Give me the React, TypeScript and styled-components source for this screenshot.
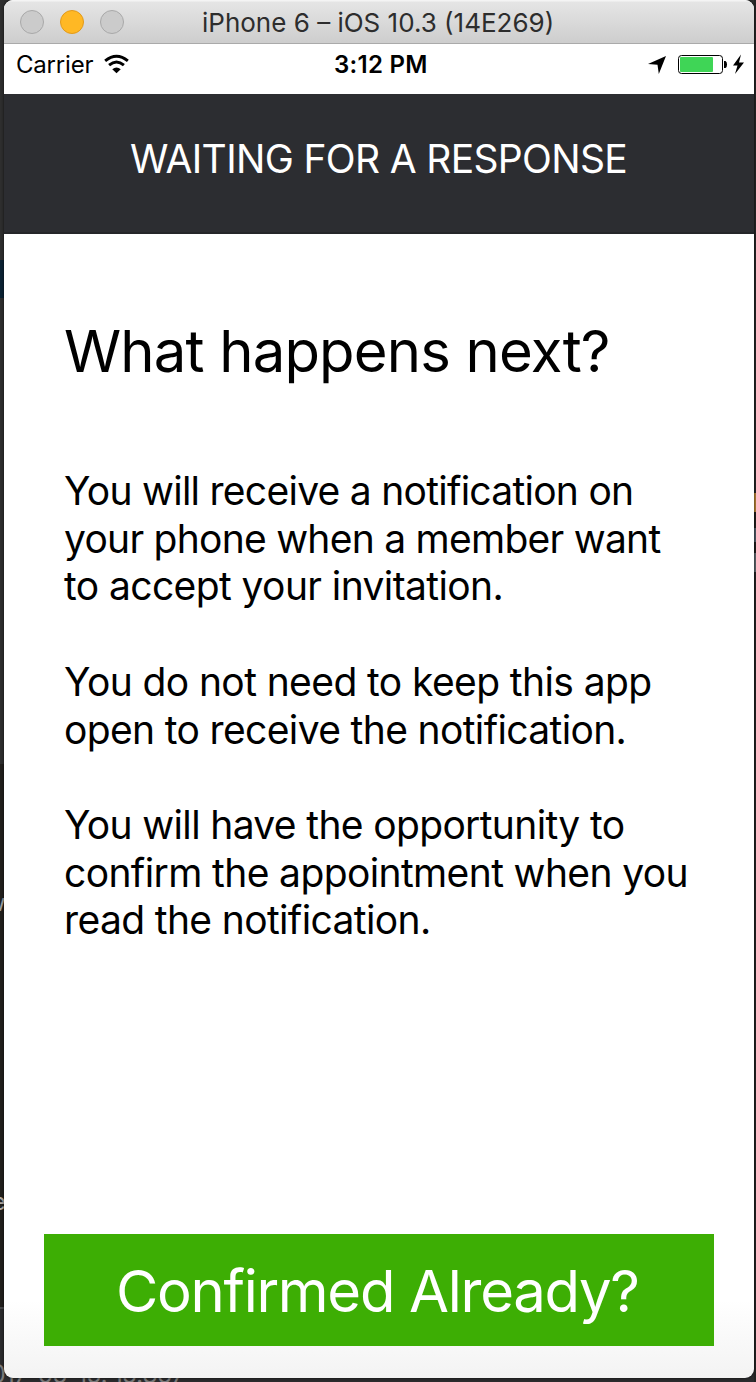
import React from 'react';
import styled, { createGlobalStyle } from 'styled-components';

const GlobalStyle = createGlobalStyle`
  * { box-sizing: border-box; }
  html, body { margin: 0; padding: 0; background: #23211f; }
  body { font-family: Inter, "Liberation Sans", sans-serif; overflow: hidden; }
`;

const Desktop = styled.div`
  position: relative;
  width: 756px;
  height: 1382px;
  padding: 0 2px 4px 4px;
  overflow: hidden;
  background: linear-gradient(#2e2e2e 0 260px, #0b2233 260px 298px, #2e2e2e 298px 764px, #211f1c 764px 1307px, #48484a 1307px 1309px, #2b2b2d 1309px);
`;

const RightEdge = styled.div`
  position: absolute;
  right: 0;
  top: 0;
  width: 2px;
  height: 1382px;
  background: linear-gradient(#242424 0 493px, #b07d35 493px 512px, #1e1d1b 512px 528px, #4b5661 528px 542px, #1e1d1b 542px 553px, #5a6268 553px 572px, #222222 572px);
`;

const Behind = styled.span<{ $x: number; $y: number; $size: number; $color: string; $tracking?: number }>`
  position: absolute;
  left: ${p => p.$x}px;
  top: ${p => p.$y}px;
  font-size: ${p => p.$size}px;
  line-height: 1;
  letter-spacing: ${p => p.$tracking ?? 0}px;
  white-space: nowrap;
  color: ${p => p.$color};
`;

const Window = styled.div`
  position: relative;
  display: flex;
  flex-direction: column;
  width: 750px;
  height: 1378px;
  border-radius: 9px;
  overflow: hidden;
  background: linear-gradient(#ffffff 0 1300px, #f3f3f3 1378px);
  box-shadow: 0 0 3px rgba(0, 0, 0, 0.7);
`;

const TitleBar = styled.div`
  display: grid;
  grid-template-columns: 140px 1fr 152px;
  align-items: center;
  height: 44px;
  flex: none;
  background: linear-gradient(#f4f4f4 0 1px, #e5e5e5 2px, #cecece 42px);
  border-bottom: 1px solid #aaaaaa;
`;

const Lights = styled.div`
  display: flex;
  gap: 16px;
  padding-left: 16px;
`;

const Light = styled.span<{ $active?: boolean }>`
  width: 24px;
  height: 24px;
  border-radius: 50%;
  background: ${p => (p.$active ? '#ffb824' : '#cbcbcb')};
  border: 1px solid ${p => (p.$active ? '#e29a1b' : '#a9a9a9')};
`;

const Text = styled.span<{ $tracking?: number }>`
  display: block;
  white-space: nowrap;
  letter-spacing: ${p => p.$tracking ?? 0}px;
`;

const WindowTitle = styled.div`
  padding: 2px 0 0 58px;
  font-size: 26px;
  line-height: 30px;
  color: #2d2d2d;
`;

const StatusBar = styled.div`
  display: grid;
  grid-template-columns: 330px 1fr 110px;
  height: 50px;
  flex: none;
  background: #ffffff;
  color: #000000;
  font-size: 24px;
  line-height: 42px;
`;

const Carrier = styled.div`
  display: flex;
  padding-left: 12px;
  gap: 11px;
`;

const Clock = styled.div`
  font-weight: 600;
`;

const StatusIcons = styled.div`
  display: flex;
`;

const Header = styled.header`
  height: 140px;
  flex: none;
  padding: 40px 0 0 126px;
  background: linear-gradient(#2c2d31 0 138px, #252629 138px);
  color: #ffffff;
  font-size: 39px;
  line-height: 50px;
`;

const Content = styled.main`
  flex: 1;
  padding: 82px 0 0 60px;
  color: #000000;
`;

const Heading = styled.h1`
  margin: 0 0 81px;
  font-size: 58px;
  line-height: 70px;
  font-weight: 400;
`;

const Paragraph = styled.p`
  margin: 0 0 47.7px;
  font-size: 39px;
  line-height: 47.7px;
`;

const ConfirmButton = styled.button`
  display: block;
  width: 670px;
  height: 112px;
  margin: 0 0 32px 40px;
  padding: 2px 0 0 72px;
  border: 0;
  background: #3dae04;
  color: #ffffff;
  font-family: inherit;
  font-size: 58px;
  line-height: 110px;
  text-align: left;
`;

export default function App() {
  return (
    <>
      <GlobalStyle />
      <Desktop>
        <RightEdge />
        <Behind $x={-14} $y={891} $size={24} $color="#a0a0a0">w</Behind>
        <Behind $x={-8} $y={1190} $size={24} $color="#b1aaa4">e</Behind>
        <Behind $x={-10} $y={1362} $size={25} $color="#7b7b7b" $tracking={-1}>017-05-15: 15:367</Behind>
        <Window>
          <TitleBar>
            <Lights>
              <Light />
              <Light $active />
              <Light />
            </Lights>
            <WindowTitle>
              <Text>iPhone 6 – iOS 10.3 (14E269)</Text>
            </WindowTitle>
          </TitleBar>
          <StatusBar>
            <Carrier>
              <Text $tracking={-0.2}>Carrier</Text>
              <svg width="25" height="42" viewBox="0 0 26 42">
                <g fill="none" stroke="#000" strokeWidth="3">
                  <path d="M1.2 16.8 Q13 7 24.8 16.8" />
                  <path d="M5.3 21.2 Q13 14.4 20.7 21.2" />
                </g>
                <path d="M8.6 25.4 Q13 21.6 17.4 25.4 L13 29.6 Z" />
              </svg>
            </Carrier>
            <Clock>
              <Text $tracking={0.3}>3:12 PM</Text>
            </Clock>
            <StatusIcons>
              <svg width="110" height="42" viewBox="644 44 110 42">
                <path d="M666 56 L648 64 L657.5 64.8 L658.8 74 Z" />
                <rect x="678.5" y="55.5" width="44" height="18" rx="3" fill="#fff" stroke="#000" />
                <rect x="680" y="57" width="33" height="15" rx="1" fill="#3fd556" />
                <path d="M724 61 H725.5 Q727 61.5 727 64.5 T725.5 68 H724 Z" />
                <path d="M741 54.5 L733 65.5 H737.5 L735 74 L744 62.5 H739 Z" />
              </svg>
            </StatusIcons>
          </StatusBar>
          <Header>
            <Text $tracking={-0.66}>WAITING FOR A RESPONSE</Text>
          </Header>
          <Content>
            <Heading>
              <Text $tracking={-0.82}>What happens next?</Text>
            </Heading>
            <Paragraph>
              <Text $tracking={-0.73}>You will receive a notification on</Text>
              <Text $tracking={-0.74}>your phone when a member want</Text>
              <Text $tracking={-0.6}>to accept your invitation.</Text>
            </Paragraph>
            <Paragraph>
              <Text $tracking={-0.6}>You do not need to keep this app</Text>
              <Text $tracking={-0.64}>open to receive the notification.</Text>
            </Paragraph>
            <Paragraph>
              <Text $tracking={-0.65}>You will have the opportunity to</Text>
              <Text $tracking={-0.62}>confirm the appointment when you</Text>
              <Text $tracking={-0.63}>read the notification.</Text>
            </Paragraph>
          </Content>
          <ConfirmButton>
            <Text $tracking={-1.3}>Confirmed Already?</Text>
          </ConfirmButton>
        </Window>
      </Desktop>
    </>
  );
}
